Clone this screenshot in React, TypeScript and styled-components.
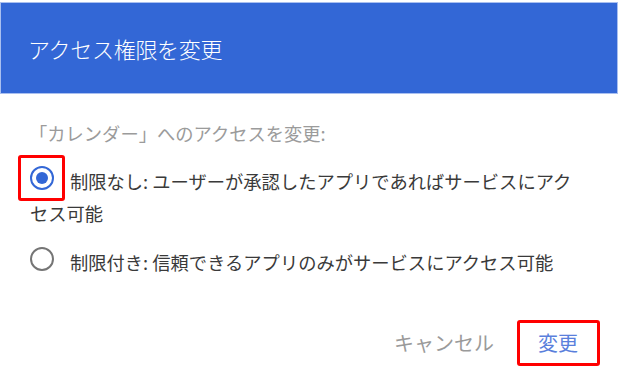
import React from "react";
import styled, { createGlobalStyle } from "styled-components";

const GlobalStyle = createGlobalStyle`
  html, body {
    margin: 0;
    padding: 0;
    background: #ffffff;
  }
  body {
    font-family: "Noto Sans CJK JP", "Noto Sans", sans-serif;
  }
`;

const Dialog = styled.div`
  width: 624px;
  height: 374px;
  padding-top: 2px;
  box-sizing: border-box;
  overflow: hidden;
`;

const Header = styled.div`
  width: 618px;
  height: 92px;
  box-sizing: border-box;
  background: #3367d6;
  border: 1px solid #a9bff0;
  display: flex;
  align-items: center;
  padding-left: 27px;
  color: #ffffff;
  font-size: 22px;
  font-weight: 300;
  letter-spacing: -0.3px;
`;

const Body = styled.div`
  padding: 27px 0 0 30px;
  width: 553px;
`;

const Subtitle = styled.div`
  font-size: 18.3px;
  line-height: 24px;
  color: #9b9b9b;
  margin-left: -1px;
  margin-bottom: 20px;
`;

const Option = styled.div`
  font-size: 18.3px;
  line-height: 32px;
  color: #3a3a3a;
  margin-bottom: 17px;
`;

const RadioWrap = styled.span`
  position: relative;
  display: inline-block;
  width: 24px;
  height: 24px;
  margin-right: 16px;
  vertical-align: -1px;
`;

const Radio = styled.span<{ $checked?: boolean }>`
  display: block;
  width: 24px;
  height: 24px;
  box-sizing: border-box;
  border-radius: 50%;
  border: 2px solid ${(p) => (p.$checked ? "#3367d6" : "#757575")};
  position: relative;

  &::after {
    content: "";
    display: ${(p) => (p.$checked ? "block" : "none")};
    position: absolute;
    left: 50%;
    top: 50%;
    width: 12px;
    height: 12px;
    margin: -6px 0 0 -6px;
    border-radius: 50%;
    background: #3367d6;
  }
`;

const Highlight = styled.span<{ $inset: string }>`
  position: absolute;
  inset: ${(p) => p.$inset};
  border: 3px solid #ff0000;
  border-radius: 3px;
  pointer-events: none;
`;

const Footer = styled.div`
  display: flex;
  justify-content: flex-end;
  align-items: center;
  gap: 44px;
  padding-right: 46px;
  margin-top: 50px;
`;

const TextButton = styled.button<{ $primary?: boolean }>`
  position: relative;
  border: none;
  background: none;
  padding: 0;
  font-family: inherit;
  font-size: 20px;
  line-height: 30px;
  color: ${(p) => (p.$primary ? "#5a7fdc" : "#9a9a9a")};
  cursor: pointer;
`;

export default function App() {
  return (
    <>
      <GlobalStyle />
      <Dialog>
        <Header>アクセス権限を変更</Header>
        <Body>
          <Subtitle>「カレンダー」へのアクセスを変更:</Subtitle>
          <Option>
            <RadioWrap>
              <Radio $checked />
              <Highlight $inset="-11px -11px -11px -12px" />
            </RadioWrap>
            制限なし: ユーザーが承認したアプリであればサービスにアクセス可能
          </Option>
          <Option>
            <RadioWrap>
              <Radio />
            </RadioWrap>
            制限付き: 信頼できるアプリのみがサービスにアクセス可能
          </Option>
        </Body>
        <Footer>
          <TextButton>キャンセル</TextButton>
          <TextButton $primary>
            変更
            <Highlight $inset="-8px -22px -8px -21px" />
          </TextButton>
        </Footer>
      </Dialog>
    </>
  );
}
